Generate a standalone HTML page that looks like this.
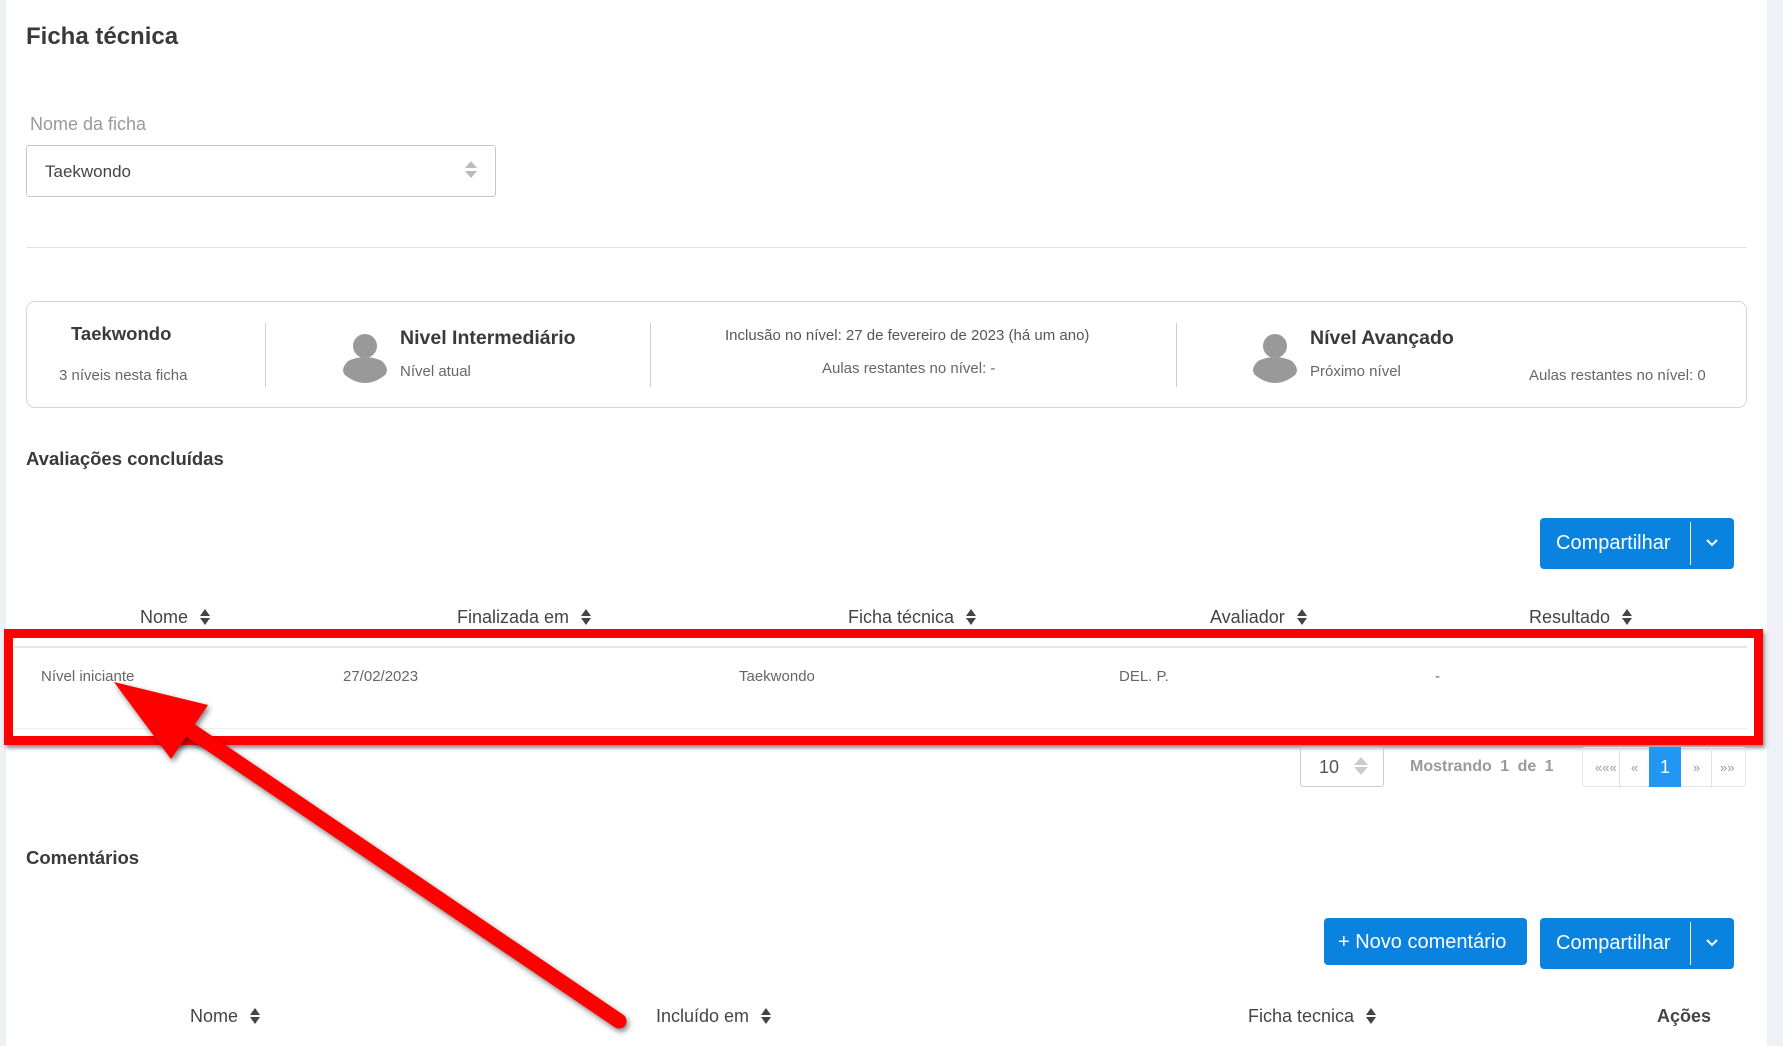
<!DOCTYPE html>
<html><head><meta charset="utf-8"><style>
*{margin:0;padding:0;box-sizing:border-box}
body{width:1783px;height:1046px;background:#fff;position:relative;overflow:hidden;font-family:"Liberation Sans",sans-serif;color:#555}
.a{position:absolute;white-space:nowrap}
.h{font-weight:bold;color:#3a3a3a}
.btn{position:absolute;background:#0a82e0;border-radius:4px;color:#fff;font-size:20px}
.sort{display:inline-block;vertical-align:middle;margin-left:12px;width:11px;height:18px;position:relative}
.sort:before{content:"";position:absolute;left:0;top:0;border-left:5.5px solid transparent;border-right:5.5px solid transparent;border-bottom:7px solid #444}
.sort:after{content:"";position:absolute;left:0;top:9px;border-left:5.5px solid transparent;border-right:5.5px solid transparent;border-top:7px solid #444}
.th{font-size:18px;color:#444}
.td{font-size:15px;color:#666}
</style></head><body>
<div class="a" style="left:0;top:0;width:6px;height:1046px;background:#eef1f6"></div>
<div class="a" style="left:1767px;top:0;width:16px;height:1046px;background:#eef1f6"></div>

<div class="a h" style="left:26px;top:23px;font-size:24px">Ficha técnica</div>
<div class="a" style="left:30px;top:114px;font-size:18px;color:#999">Nome da ficha</div>
<div class="a" style="left:26px;top:145px;width:470px;height:52px;border:1px solid #c8c8cc;border-radius:3px"></div>
<div class="a" style="left:45px;top:162px;font-size:17px;color:#444">Taekwondo</div>
<div class="a" style="left:465px;top:161px;border-left:6px solid transparent;border-right:6px solid transparent;border-bottom:7px solid #bbb"></div>
<div class="a" style="left:465px;top:171px;border-left:6px solid transparent;border-right:6px solid transparent;border-bottom:0;border-top:7px solid #bbb"></div>
<div class="a" style="left:26px;top:247px;width:1721px;height:1px;background:#e2e2e2"></div>

<div class="a" style="left:26px;top:301px;width:1721px;height:107px;border:1.5px solid #d5d5d5;border-radius:9px"></div>
<div class="a" style="left:265px;top:323px;width:1px;height:64px;background:#ccc"></div>
<div class="a" style="left:650px;top:323px;width:1px;height:64px;background:#ccc"></div>
<div class="a" style="left:1176px;top:323px;width:1px;height:64px;background:#ccc"></div>
<div class="a h" style="left:71px;top:323px;font-size:18.5px">Taekwondo</div>
<div class="a" style="left:59px;top:367px;font-size:15px;color:#666">3 níveis nesta ficha</div>
<svg class="a" style="left:340px;top:331px" width="50" height="52" viewBox="0 0 50 52"><circle cx="25" cy="15" r="12" fill="#999"/><path d="M8 30 Q25 22 42 30 Q50 38 45 44 Q25 60 5 44 Q0 38 8 30Z" fill="#999"/></svg>
<div class="a h" style="left:400px;top:327px;font-size:19.5px">Nivel Intermediário</div>
<div class="a" style="left:400px;top:363px;font-size:15px;color:#666">Nível atual</div>
<div class="a" style="left:725px;top:327px;font-size:15px;color:#555">Inclusão no nível: 27 de fevereiro de 2023 (há um ano)</div>
<div class="a" style="left:822px;top:360px;font-size:15px;color:#666">Aulas restantes no nível: -</div>
<svg class="a" style="left:1250px;top:331px" width="50" height="52" viewBox="0 0 50 52"><circle cx="25" cy="15" r="12" fill="#999"/><path d="M8 30 Q25 22 42 30 Q50 38 45 44 Q25 60 5 44 Q0 38 8 30Z" fill="#999"/></svg>
<div class="a h" style="left:1310px;top:327px;font-size:19.5px">Nível Avançado</div>
<div class="a" style="left:1310px;top:363px;font-size:15px;color:#666">Próximo nível</div>
<div class="a" style="left:1529px;top:367px;font-size:15px;color:#666">Aulas restantes no nível: 0</div>

<div class="a h" style="left:26px;top:448px;font-size:18.5px">Avaliações concluídas</div>
<div class="btn" style="left:1540px;top:518px;width:194px;height:51px"><span class="a" style="left:16px;top:14px">Compartilhar</span><div class="a" style="left:150px;top:4px;width:1px;height:43px;background:#fff"></div><svg class="a" style="left:165px;top:20px" width="14" height="10"><path d="M2 2 L7 7 L12 2" stroke="#fff" stroke-width="2" fill="none"/></svg></div>

<div class="a th" style="left:140px;top:607px">Nome<span class="sort"></span></div>
<div class="a th" style="left:457px;top:607px">Finalizada em<span class="sort"></span></div>
<div class="a th" style="left:848px;top:607px">Ficha técnica<span class="sort"></span></div>
<div class="a th" style="left:1210px;top:607px">Avaliador<span class="sort"></span></div>
<div class="a th" style="left:1529px;top:607px">Resultado<span class="sort"></span></div>
<div class="a" style="left:14px;top:646px;width:1733px;height:2px;background:#e3e5e8"></div>
<div class="a td" style="left:41px;top:668px">Nível iniciante</div>
<div class="a td" style="left:343px;top:668px">27/02/2023</div>
<div class="a td" style="left:739px;top:668px">Taekwondo</div>
<div class="a td" style="left:1119px;top:668px">DEL. P.</div>
<div class="a td" style="left:1435px;top:668px">-</div>
<div class="a" style="left:14px;top:728px;width:1733px;height:1px;background:#eee"></div>
<div class="a" style="left:4px;top:629px;width:1759px;height:116px;border:9px solid #ff0000;box-shadow:2px 3px 4px rgba(0,0,0,.45)"></div>

<div class="a" style="left:1300px;top:747px;width:84px;height:40px;border:1px solid #ccc;border-radius:3px"></div>
<div class="a" style="left:1319px;top:757px;font-size:18px;color:#555">10</div>
<div class="a" style="left:1354px;top:757px;border-left:7px solid transparent;border-right:7px solid transparent;border-bottom:8px solid #ccc"></div>
<div class="a" style="left:1354px;top:767px;border-left:7px solid transparent;border-right:7px solid transparent;border-top:8px solid #ccc"></div>
<div class="a" style="left:1410px;top:758px;font-size:16px;font-weight:bold;color:#999;word-spacing:4px">Mostrando 1 de 1</div>
<div class="a" style="left:1582px;top:747px;width:164px;height:40px;border:1px solid #e3e3e3;border-radius:3px;font-size:13px;color:#999">
<span class="a" style="left:12px;top:12px">«««</span><div class="a" style="left:36px;top:0;width:1px;height:40px;background:#e3e3e3"></div>
<span class="a" style="left:48px;top:12px">«</span>
<div class="a" style="left:66px;top:-1px;width:32px;height:40px;background:#2196f3;color:#fff;font-size:18px;text-align:center;line-height:40px">1</div>
<span class="a" style="left:110px;top:12px">»</span><div class="a" style="left:128px;top:0;width:1px;height:40px;background:#e3e3e3"></div>
<span class="a" style="left:137px;top:12px">»»</span></div>

<div class="a h" style="left:26px;top:847px;font-size:18.5px">Comentários</div>
<div class="btn" style="left:1324px;top:918px;width:203px;height:47px"><span class="a" style="left:14px;top:13px">+ Novo comentário</span></div>
<div class="btn" style="left:1540px;top:918px;width:194px;height:51px"><span class="a" style="left:16px;top:14px">Compartilhar</span><div class="a" style="left:150px;top:4px;width:1px;height:43px;background:#fff"></div><svg class="a" style="left:165px;top:20px" width="14" height="10"><path d="M2 2 L7 7 L12 2" stroke="#fff" stroke-width="2" fill="none"/></svg></div>

<div class="a th" style="left:190px;top:1006px">Nome<span class="sort"></span></div>
<div class="a th" style="left:656px;top:1006px">Incluído em<span class="sort"></span></div>
<div class="a th" style="left:1248px;top:1006px">Ficha tecnica<span class="sort"></span></div>
<div class="a th" style="left:1657px;top:1006px;font-weight:bold">Ações</div>

<svg class="a" style="left:0;top:0;filter:drop-shadow(2px 3px 3px rgba(0,0,0,.5))" width="1783" height="1046">
<line x1="178" y1="722" x2="619" y2="1021" stroke="#ff0000" stroke-width="15" stroke-linecap="round"/>
<polygon points="114,682 208,705 171,759" fill="#ff0000"/>
</svg>
</body></html>
